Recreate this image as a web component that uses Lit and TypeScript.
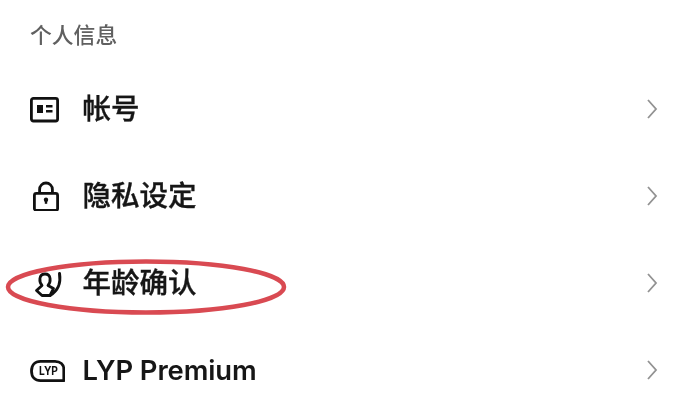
import { LitElement, html, css, svg } from "lit";
import { customElement } from "lit/decorators.js";

const ICONS: Record<string, unknown> = {
  card: svg`<rect x="2.400" y="4.400" width="26.200" height="22.600" rx="2" fill="none" stroke="#111" stroke-width="2.800"/>
    <rect x="8" y="11" width="6" height="8" fill="#111"/>
    <path d="M17 12.300h6.500M17 17.300h6.500" stroke="#111" stroke-width="2.400" fill="none"/>`,
  lock: svg`<rect x="5.400" y="12.400" width="23.200" height="17" rx="2" fill="none" stroke="#111" stroke-width="2.800"/>
    <path d="M10.600 12.400V8.400a6.400 6.400 0 0 1 12.800 0v4" fill="none" stroke="#111" stroke-width="2.800"/>
    <circle cx="17" cy="18.800" r="2.200" fill="#111"/><path d="M17 19v3.800" stroke="#111" stroke-width="2.400"/>`,
  age: svg`<path d="M13 17.500C10 14 9.500 6 16 6s6 8 3 11.500l5.500 3-3.500 7h-8l-5.500-5z" fill="none" stroke="#111" stroke-width="2.800" stroke-linejoin="round"/>
    <path d="M30.500 5.500c1.200 8 .5 16-9.500 22" fill="none" stroke="#111" stroke-width="3" stroke-linecap="round"/>`,
  lyp: svg`<path d="M11.500 6.300h14.500c5.400 0 8.800 3.300 8.800 8.200v11.200H11.500c-5.500 0-9-3.700-9-9.700s3.500-9.700 9-9.700z" fill="none" stroke="#111" stroke-width="2.800" stroke-linejoin="round"/>
    <text x="19.500" y="20.300" text-anchor="middle" font-family="Inter, sans-serif" font-size="11.500" font-weight="700" fill="#111" textLength="19" lengthAdjust="spacingAndGlyphs">LYP</text>`,
};

const ROWS = [
  { icon: "card", label: "帐号", latin: false },
  { icon: "lock", label: "隐私设定", latin: false },
  { icon: "age", label: "年龄确认", latin: false },
  { icon: "lyp", label: "LYP Premium", latin: true },
];

@customElement("app-root")
export class AppRoot extends LitElement {
  static styles = css`
    :host {
      display: block;
      position: relative;
      width: 678px;
      height: 410px;
      overflow: hidden;
      background: #fff;
      font-family: "Inter", "Noto Sans CJK SC", sans-serif;
    }
    .page {
      height: 100%;
      filter: blur(0.45px);
    }
    .section {
      height: 65px;
      padding: 19px 0 0 30px;
      box-sizing: border-box;
      font-family: "Noto Sans CJK SC", sans-serif;
      font-size: 21.800px;
      font-weight: 500;
      line-height: 30px;
      color: #606060;
    }
    .row {
      display: flex;
      align-items: center;
      height: 87px;
      padding: 0 20px 0 29px;
    }
    .icon {
      width: 36px;
      height: 30px;
      flex: none;
      margin-right: 17.500px;
    }
    .label {
      flex: 1;
      font-size: 28.500px;
      font-weight: 500;
      color: #161616;
      line-height: 40px;
      -webkit-text-stroke: 0.35px #161616;
    }
    .label.latin {
      font-size: 27.400px;
      font-weight: 600;
      letter-spacing: -0.1px;
      -webkit-text-stroke: 0;
    }
    .chev {
      width: 12px;
      height: 22px;
      flex: none;
    }
    .mark {
      position: absolute;
      left: 0;
      top: 250px;
      width: 300px;
      height: 75px;
    }
  `;

  render() {
    return html`
      <div class="page">
        <div class="section">个人信息</div>
        ${ROWS.map(
          (r) => html`<div class="row">
            <svg class="icon" viewBox="0 0 36 30">${ICONS[r.icon]}</svg>
            <span class="label ${r.latin ? "latin" : ""}">${r.label}</span>
            <svg class="chev" viewBox="0 0 12 22">
              <path d="M2 2l8 9-8 9" fill="none" stroke="#929292" stroke-width="1.800"/>
            </svg>
          </div>`
        )}
        <svg class="mark" viewBox="0 0 300 75">
          <ellipse cx="146" cy="37" rx="138" ry="25.500" fill="none" stroke="#d94a52" stroke-width="4.500"/>
        </svg>
      </div>
    `;
  }
}
